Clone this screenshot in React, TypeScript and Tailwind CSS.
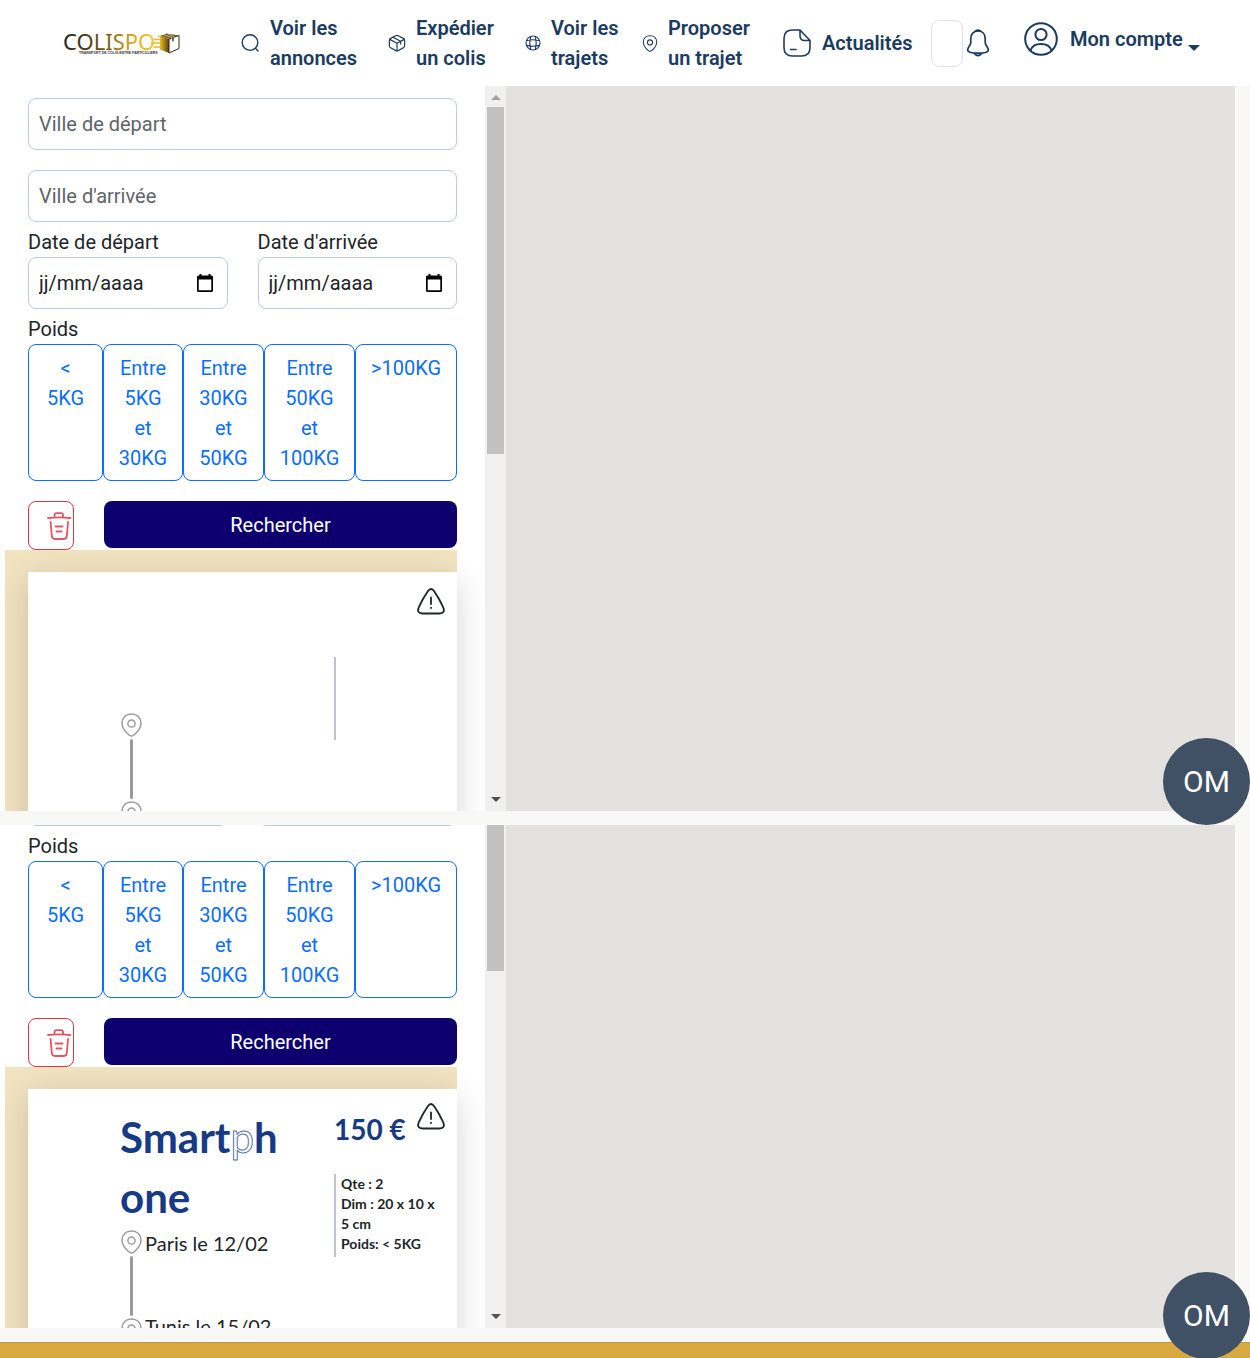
import { useId, type ReactNode } from "react";

type IconProps = { className?: string };

function Svg({ className, children, sw = 1.5, box = "0 0 24 24" }: IconProps & { children: ReactNode; sw?: number; box?: string }) {
  return (
    <svg viewBox={box} fill="none" stroke="currentColor" strokeWidth={sw} strokeLinecap="round" strokeLinejoin="round" className={className} aria-hidden="true">
      {children}
    </svg>
  );
}

const SearchIcon = ({ className }: IconProps) => (
  <Svg className={className} box="0 0 18 18" sw={1.4}>
    <circle cx="9" cy="8.6" r="7.8" />
    <path d="M14.8 14.6 17 17" />
  </Svg>
);

const PackageIcon = ({ className }: IconProps) => (
  <Svg className={className} box="0 0 18 18" sw={1.2}>
    <path d="M9 1.4Q9.6 1.4 10.2 1.7L15.4 4.4Q16.6 5 16.6 6.4V11.8Q16.6 13.2 15.4 13.8L10.2 16.6Q9 17.1 7.8 16.6L2.6 13.8Q1.4 13.2 1.4 11.8V6.4Q1.4 5 2.6 4.4L7.8 1.7Q8.4 1.4 9 1.4Z" />
    <path d="M1.8 5.4 9 9.2 16.2 5.4M9 9.2V16.8M5 3.2 12.6 7.2V10" />
  </Svg>
);

const GlobeIcon = ({ className }: IconProps) => (
  <Svg className={className} box="0 0 16 16" sw={1.1}>
    <circle cx="8" cy="8" r="7" />
    <path d="M5.6 1.5Q4 8 5.6 14.5M10.4 1.5Q12 8 10.4 14.5M1.5 5.6Q8 4 14.5 5.6M1.5 10.4Q8 12 14.5 10.4" />
  </Svg>
);

const PinIcon = ({ className }: IconProps) => (
  <Svg className={className} box="0 0 21 24" sw={1.5}>
    <path d="M10.5 1C5 1 1 4.6 1 10c0 4.800 3 8.600 6.700 11.800 1.700 1.500 3.900 1.500 5.600 0C17 18.600 20 14.800 20 10c0-5.400-4-9-9.500-9Z" />
    <circle cx="10.500" cy="10.500" r="3.600" />
  </Svg>
);

const NoteIcon = ({ className }: IconProps) => (
  <Svg className={className} box="0 0 28 28" sw={1.6}>
    <path d="M17 1H9.500C3.500 1 1 3.500 1 9.500V18.500C1 24.500 3.500 27 9.500 27H18.500C24.500 27 27 24.500 27 18.500V11.500ZM17 1V6.500C17 10 18.300 11.500 21.500 11.500H27" />
    <path d="M7.500 20.500H13" />
  </Svg>
);

const BellIcon = ({ className }: IconProps) => (
  <Svg className={className} box="0 0 24 28" sw={1.7}>
    <path d="M12 2C7.500 2 4.800 5 4.800 9.500V13.500C4.800 16.500 1.600 18.500 1.600 21C1.600 23.800 7 24.200 12 24.200S22.400 23.800 22.400 21C22.400 18.500 19.200 16.500 19.200 13.500V9.500C19.200 5 16.500 2 12 2Z" />
    <path d="M9.600 1.900Q12 .300 14.400 1.900M8.600 24.600Q12 28.600 15.400 24.600" />
  </Svg>
);

const AccountIcon = ({ className }: IconProps) => (
  <Svg className={className} box="0 0 34 34" sw={2}>
    <circle cx="17" cy="17" r="15.800" />
    <circle cx="17" cy="12.500" r="5.600" />
    <path d="M6.500 28.500C7.800 24.300 12 22 17 22S26.200 24.300 27.500 28.500" />
  </Svg>
);

const CalendarIcon = ({ className }: IconProps) => (
  <svg viewBox="0 0 16 18" className={className} aria-hidden="true">
    <path fillRule="evenodd" d="M2.500 0H4.500V1.500H11.500V0H13.500V1.500H14.500Q16 1.500 16 3V16.500Q16 18 14.500 18H1.500Q0 18 0 16.500V3Q0 1.500 1.500 1.500H2.500ZM1.700 5.500V16.300H14.300V5.500Z" fill="black" />
  </svg>
);

const TrashIcon = ({ className }: IconProps) => (
  <Svg className={className} box="0 0 24 28" sw={1.8}>
    <path d="M1 6Q12 4.600 23.200 6M7.500 5.200V3.200Q7.500 1.200 9.500 1.200H14Q16 1.200 16 3.200V5.200" />
    <path d="M3.600 10 4.800 24Q5 27 8 27H16.800Q19.600 27 19.800 24L21 10M8.500 14.500H15.500M9.500 19.500H14.500" />
  </Svg>
);

const WarningIcon = ({ className }: IconProps) => (
  <Svg className={className} box="0 0 28 27" sw={1.800}>
    <path d="M10.800 3.200Q14-1.200 17.200 3.200 22.500 11 26 18.800C28 23.200 26.500 25.500 22.500 25.500H5.500C1.500 25.500 0 23.200 2 18.800Q5.500 11 10.800 3.200Z" />
    <path d="M14 9.500V16M14 19.600V20" />
  </Svg>
);

function Logo() {
  return (
    <div className="relative w-[118px] text-[#333]" role="img" aria-label="Colispo">
      <svg viewBox="0 0 118 28" className="h-7 w-[118px]">
        <defs>
          <linearGradient id="gold" gradientUnits="userSpaceOnUse" x1="0" y1="0" x2="90" y2="0">
            <stop offset="0" stopColor="#1f1f1c" />
            <stop offset=".45" stopColor="#6d5215" />
            <stop offset=".8" stopColor="#d9ac1a" />
            <stop offset="1" stopColor="#f0c828" />
          </linearGradient>
          <linearGradient id="side" x1="0" y1="0" x2="1" y2="0">
            <stop offset="0" stopColor="#e8bd24" />
            <stop offset="1" stopColor="#59400f" />
          </linearGradient>
        </defs>
        <text x="1" y="21" fontFamily="'Noto Sans', sans-serif" fontSize="22" fontWeight="400" fill="url(#gold)">COLISPO</text>
        <text x="17" y="25" fontFamily="'Liberation Sans', sans-serif" fontSize="3.500" fill="#333">TRANSPORT DE COLIS ENTRE PARTICULIERS</text>
        <path d="M92 10.500H100M89 14H101M92 18H102M96 7.500H101" stroke="#e8bd24" strokeWidth="1.600" />
        <path d="M98 7 107 10V24L98 20.500Z" fill="url(#side)" />
        <path d="M98 7 105 4.500 117 6.500 107 10Z" fill="#8a661a" />
        <path d="M107 10 117 6.500V19.500L107 24Z" fill="white" stroke="#3b2b0d" strokeWidth="1" />
        <path d="M102 5.500 110 8.500V13L112 12V8L105 4.800" fill="#3b2b0d" stroke="white" strokeWidth=".6" />
      </svg>
    </div>
  );
}

const links = [
  { label: "Voir les annonces", icon: <SearchIcon className="size-[18px]" />, gap: "gap-[11px]", width: "w-[90px]" },
  { label: "Expédier un colis", icon: <PackageIcon className="size-[18px]" />, gap: "gap-[10px]", width: "w-20" },
  { label: "Voir les trajets", icon: <GlobeIcon className="size-4" />, gap: "gap-[10px]", width: "w-[70px]" },
  { label: "Proposer un trajet", icon: <PinIcon className="h-[17px] w-4" />, gap: "gap-[10px]", width: "w-[84px]" },
  { label: "Actualités", icon: <NoteIcon className="size-7" />, gap: "gap-[11px]", width: "w-[94px]" },
];

function Header() {
  return (
    <header className="flex h-[86px] items-center bg-white text-xl leading-[30px] font-semibold text-[#1b3b60]">
      <a href="#accueil" className="w-[241px] shrink-0 pl-[62px]">
        <Logo />
      </a>
      <nav className="grid flex-1 grid-cols-[147fr_137fr_117fr_141fr_148fr] items-center">
        {links.map((l) => (
          <a key={l.label} href="#" className={`flex items-center ${l.gap}`}>
            <span className="shrink-0">{l.icon}</span>
            <span className={`shrink-0 ${l.width}`}>{l.label}</span>
          </a>
        ))}
      </nav>
      <div className="flex w-[319px] shrink-0 items-center">
        <button aria-label="Recherche" className="h-[47px] w-8 rounded-lg border border-[#dee2e6]" />
        <button aria-label="Notifications" className="ml-[3px]">
          <BellIcon className="h-7 w-6" />
        </button>
        <button className="mb-2 ml-[34px] flex items-center">
          <AccountIcon className="size-[34px]" />
          <span className="ml-3">Mon compte</span>
          <span className="mt-[18px] ml-[5px] border-x-6 border-t-6 border-x-transparent border-t-[#1b3b60]" />
        </button>
      </div>
    </header>
  );
}

const weights = ["< 5KG", "Entre 5KG et 30KG", "Entre 30KG et 50KG", "Entre 50KG et 100KG", ">100KG"];
const field = "h-[52px] w-full rounded-lg border border-[#bfcae3] px-[10px]";

function DateField({ id, label }: { id: string; label: string }) {
  return (
    <div>
      <label htmlFor={id} className="block">{label}</label>
      <div className={`flex items-center justify-between ${field}`}>
        <input id={id} placeholder="jj/mm/aaaa" className="w-full min-w-0 outline-none placeholder:text-[#212529]" />
        <CalendarIcon className="mr-1 h-[18px] w-4 shrink-0" />
      </div>
    </div>
  );
}

function SearchForm() {
  const id = useId();
  return (
    <form>
      <input aria-label="Ville de départ" placeholder="Ville de départ" className={`mb-5 block placeholder:text-[#5f6469] ${field}`} />
      <input aria-label="Ville d'arrivée" placeholder="Ville d'arrivée" className={`mb-[5px] block placeholder:text-[#5f6469] ${field}`} />
      <div className="grid grid-cols-2 gap-[30px]">
        <DateField id={`${id}-from`} label="Date de départ" />
        <DateField id={`${id}-to`} label="Date d'arrivée" />
      </div>
      <fieldset className="mt-[5px]">
        <legend>Poids</legend>
        <div className="grid grid-cols-[75fr_80fr_81fr_91fr_102fr] text-center text-[#0d6efd]">
          {weights.map((w) => (
            <label key={w} className="relative rounded-lg border border-[#0d6efd] px-[14px] pt-2 pb-[7px]">
              <input type="radio" name={`${id}-weight`} className="sr-only" />
              {w}
            </label>
          ))}
        </div>
      </fieldset>
      <div className="mt-5 flex items-start gap-[30px]">
        <button type="reset" aria-label="Effacer" className="flex h-[49px] w-[46px] items-center justify-end rounded-lg border border-[#dc3545] pr-0.5 text-[#e25563]">
          <TrashIcon className="h-7 w-6" />
        </button>
        <button type="submit" className="h-[47px] flex-1 rounded-lg bg-[#0d006e] text-white">Rechercher</button>
      </div>
    </form>
  );
}

type Ad = { price: string; details: string[]; stops: string[] };

function AdCard({ ad }: { ad?: Ad }) {
  return (
    <article className="relative flex h-[420px] bg-white font-[Lato,sans-serif] shadow-[0_8px_30px_rgba(0,0,0,0.16)]">
      <div className="flex-1 pt-[18px] pl-[92px]">
        <h2 className="h-[123px] text-[42px] leading-[60px] font-bold text-[#163a85]">
          {ad && (
            <>
              Smart<span className="font-normal text-white [-webkit-text-stroke:1px_#5570a8]">p</span>h<br />one
            </>
          )}
        </h2>
        <div className="flex gap-0.5">
          <div className="flex flex-col items-center text-[#9b9b9b]">
            <PinIcon className="h-6 w-[23px]" />
            <span className="my-0.5 h-[60px] w-[3px] rounded-full bg-[#9b9b9b]" />
            <PinIcon className="h-6 w-[23px]" />
          </div>
          <ul className="text-xl leading-[26px] text-[#212529]">
            {ad?.stops.map((s) => <li key={s} className="h-[83px]">{s}</li>)}
          </ul>
        </div>
      </div>
      <div className="w-[123px] shrink-0">
        <p className="h-[85px] pt-5 text-[28px] leading-10 font-bold text-[#163a85]">{ad?.price}</p>
        <div className="h-[83px] border-l-2 border-[#bfc4c9] pr-5 pl-[5px] text-sm leading-[20px] font-bold text-[#212529]">
          {ad?.details.map((d) => <p key={d}>{d}</p>)}
        </div>
      </div>
      <button aria-label="Signaler" className={`absolute right-3 ${ad ? "top-[14px]" : "top-4"} text-[#212529]`}>
        <WarningIcon className="h-[27px] w-7" />
      </button>
    </article>
  );
}

function Scrollbar() {
  return (
    <div className="flex w-[21px] shrink-0 flex-col items-center bg-[#f0f0f0]" aria-hidden="true">
      <span className="mt-[9px] border-x-5 border-b-5 border-x-transparent border-b-[#a3a3a3]" />
      <span className="mt-[7px] h-[347px] w-[17px] bg-[#c1c1c1]" />
      <span className="mt-auto mb-[9px] border-x-5 border-t-5 border-x-transparent border-t-[#505050]" />
    </div>
  );
}

function Browser({ ad }: { ad?: Ad }) {
  return (
    <div className="flex h-[725px] w-full shrink-0">
      <div className="w-[485px] shrink-0 overflow-hidden bg-white px-7 pt-3">
        <SearchForm />
        <div className="-ml-[23px] overflow-x-visible bg-[#f1e2c0] pt-[22px] pl-[23px]">
          <AdCard ad={ad} />
        </div>
      </div>
      <Scrollbar />
      <div className="mr-[15px] flex-1 bg-[#e4e2de]" role="region" aria-label="Carte" />
    </div>
  );
}

function Bubble({ className }: IconProps) {
  return (
    <button className={`absolute right-0 z-10 size-[87px] rounded-full bg-[#405065] text-[30px] text-white ${className}`}>OM</button>
  );
}

const phone: Ad = {
  price: "150 €",
  details: ["Qte : 2", "Dim : 20 x 10 x 5 cm", "Poids: < 5KG"],
  stops: ["Paris le 12/02", "Tunis le 15/02"],
};

export default function App() {
  return (
    <div className="overflow-hidden bg-[#f8f8f6] font-[Roboto,sans-serif] text-xl leading-[30px] text-[#212529]">
      <Header />
      <main>
        <section className="relative pb-[14px]">
          <Browser />
          <Bubble className="bottom-0" />
        </section>
        <section className="relative pb-[14px]">
          <div className="flex h-[503px] items-end overflow-hidden">
            <Browser ad={phone} />
          </div>
          <Bubble className="-bottom-[17px]" />
        </section>
      </main>
      <footer className="h-4 border-t border-[#b8974a] bg-[#d8a940]" />
    </div>
  );
}
